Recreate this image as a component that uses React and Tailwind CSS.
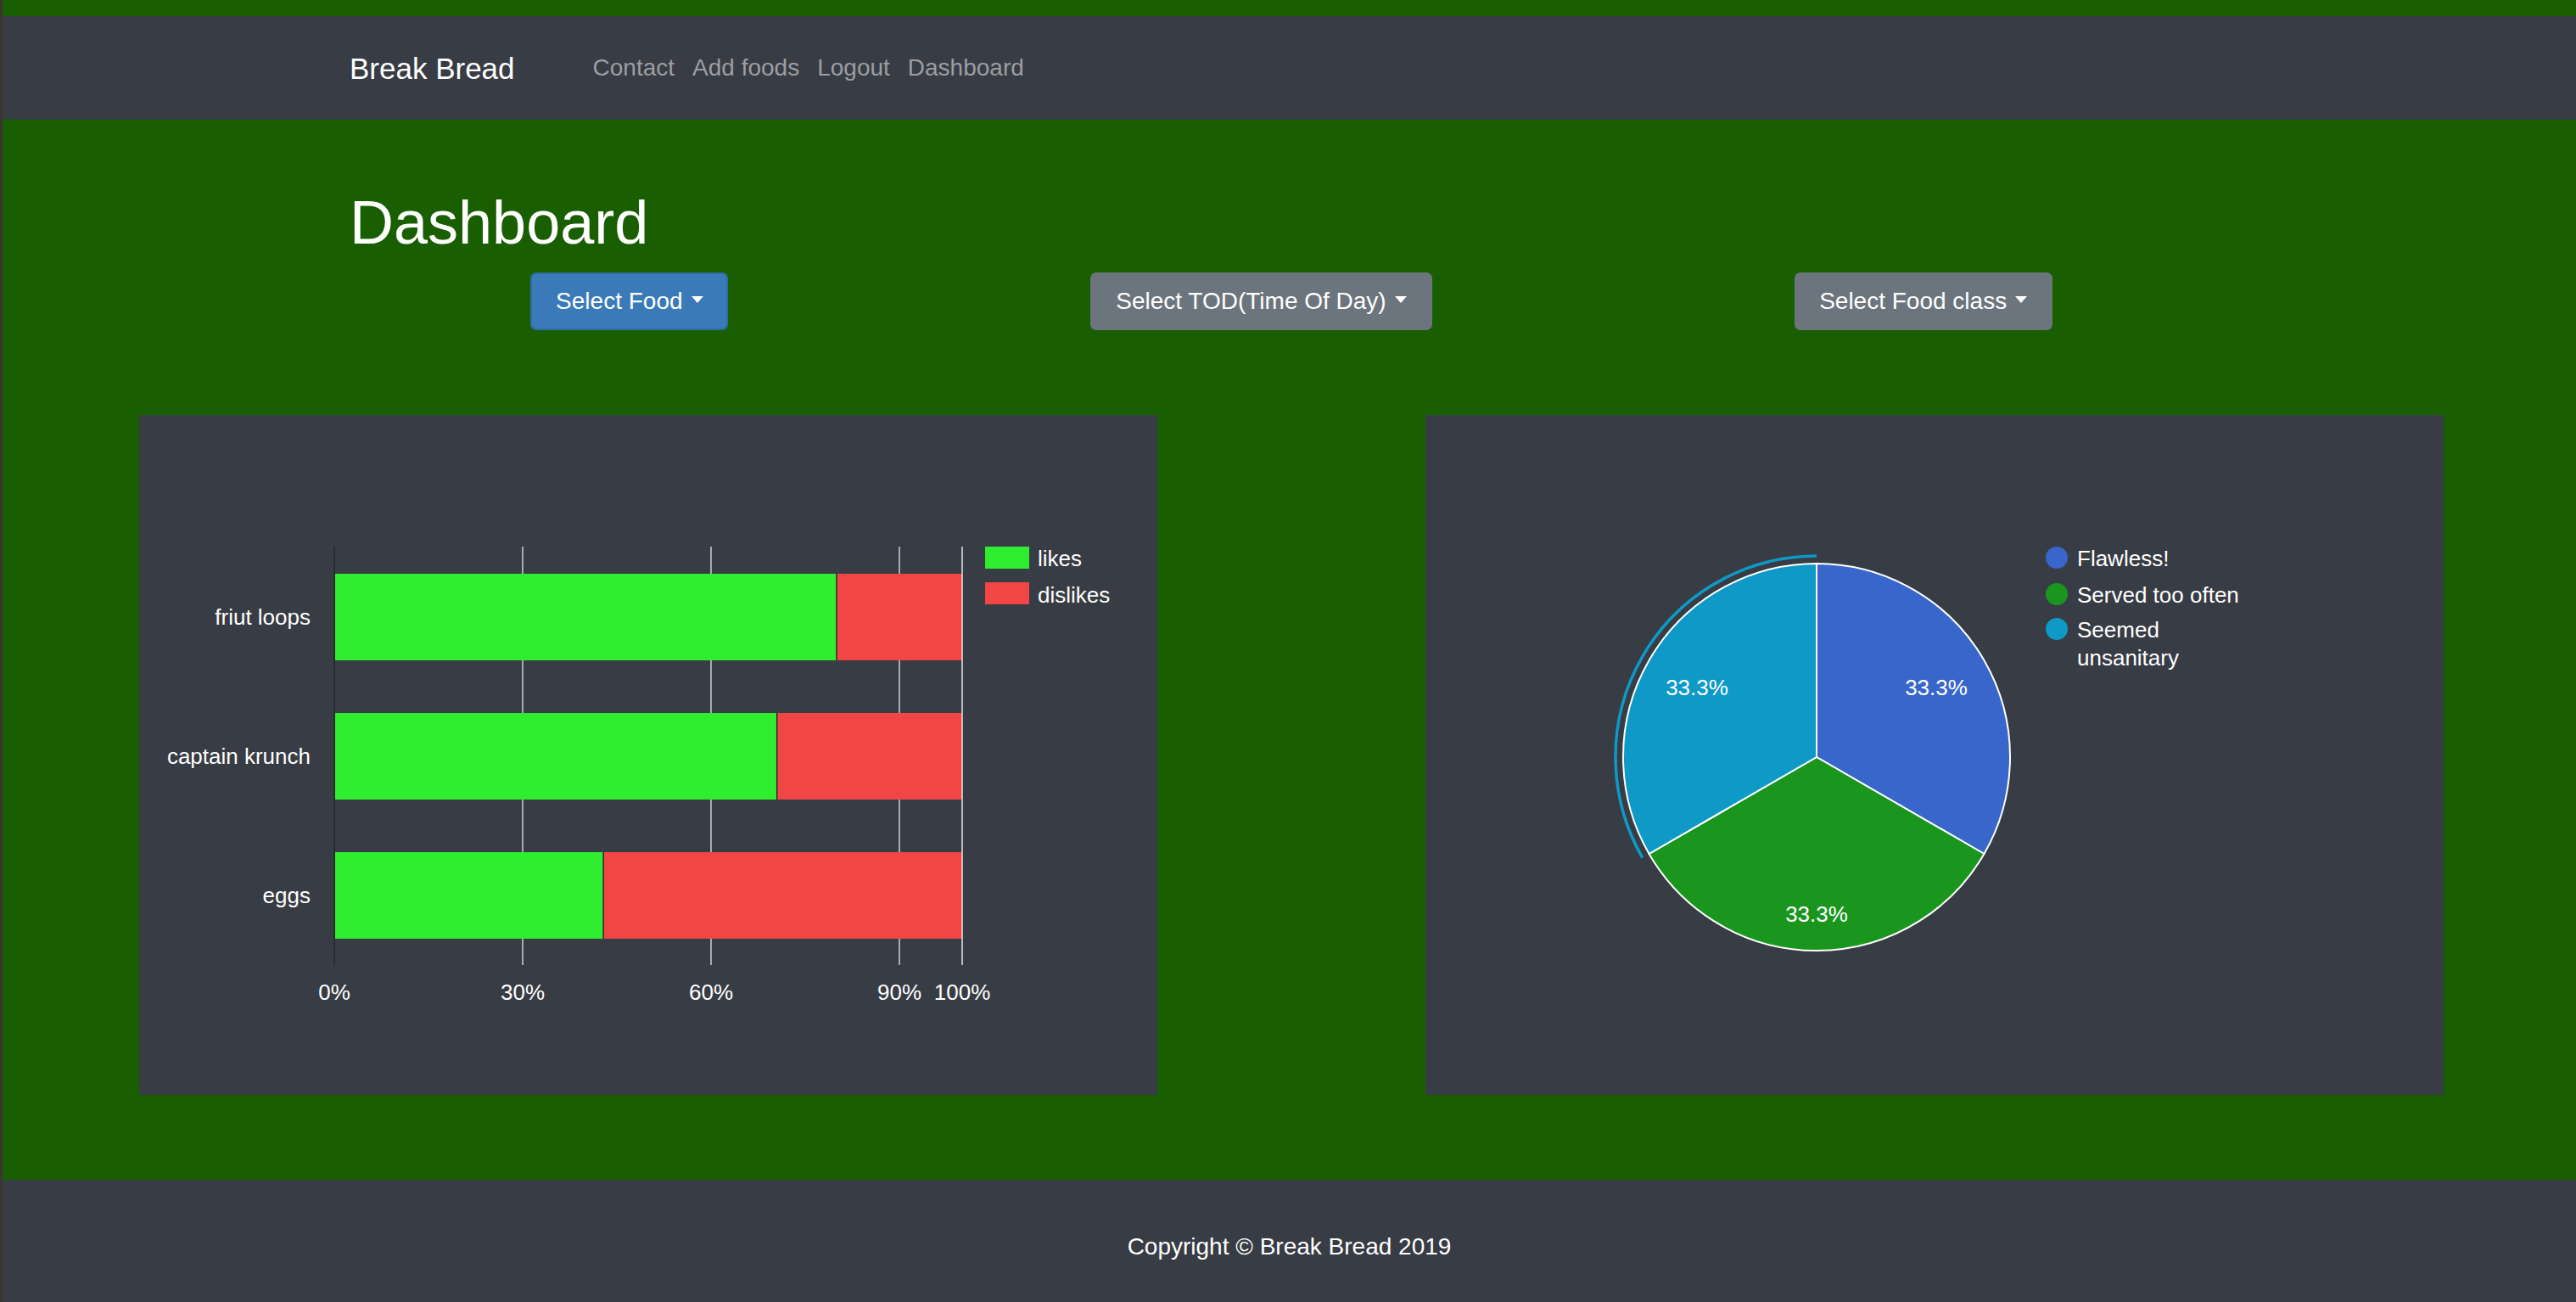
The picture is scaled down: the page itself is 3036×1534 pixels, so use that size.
const FONT = "'Liberation Sans', Arial, Helvetica, sans-serif";

// ─── Data ────────────────────────────────────────────────────────────────────
const foods = [
  { label: "friut loops", likes: 0.8 },
  { label: "captain krunch", likes: 0.705 },
  { label: "eggs", likes: 3 / 7 },
];

const slices = [
  { name: "Flawless!", color: "#3866cb", from: -90, to: 30 },
  { name: "Served too often", color: "#1a961f", from: 30, to: 150 },
  { name: "Seemed unsanitary", color: "#0e99c6", from: 150, to: 270 },
];

// ─── Helpers ─────────────────────────────────────────────────────────────────
function polar(cx, cy, r, deg) {
  const a = (deg * Math.PI) / 180;
  return [cx + r * Math.cos(a), cy + r * Math.sin(a)];
}

function Caret() {
  return (
    <span className="ml-[10px] inline-block align-[0.255em] border-x-[7px] border-t-[8px] border-x-transparent border-t-white" />
  );
}

// ─── Bar chart ───────────────────────────────────────────────────────────────
function BarChart() {
  const x0 = 230;
  const w = 740;
  const ticks = [0.3, 0.6, 0.9];
  return (
    <svg width="1200" height="800" viewBox="0 0 1200 800" fontFamily={FONT} fontSize="26" fill="#fff">
      {ticks.map((t) => (
        <line key={t} x1={x0 + w * t} x2={x0 + w * t} y1="155" y2="648" stroke="#cfcfcf" strokeWidth="1.5" />
      ))}
      <line x1={x0} x2={x0} y1="155" y2="648" stroke="#262626" strokeWidth="1.5" />

      {foods.map((f, i) => {
        const y = 187 + 164 * i;
        const split = x0 + w * f.likes;
        return (
          <g key={f.label}>
            <rect x={x0 + 1} y={y} width={split - x0 - 1} height="102" fill="#2eee2f" />
            <rect x={split} y={y} width={x0 + w - split} height="102" fill="#f24545" />
            <line x1={split} x2={split} y1={y} y2={y + 102} stroke="#2a2a2a" strokeWidth="1.5" />
            <text x="202" y={y + 60} textAnchor="end">
              {f.label}
            </text>
          </g>
        );
      })}
      <line x1={x0 + w} x2={x0 + w} y1="155" y2="648" stroke="#e6e6e6" strokeWidth="1.5" />

      {[0, 0.3, 0.6, 0.9, 1].map((t) => (
        <text key={t} x={x0 + w * t} y="689" textAnchor="middle">
          {Math.round(t * 100)}%
        </text>
      ))}

      {/* legend */}
      <rect x="997" y="155" width="52" height="26" fill="#2eee2f" />
      <text x="1059" y="178">likes</text>
      <rect x="997" y="197" width="52" height="26" fill="#f24545" />
      <text x="1059" y="221">dislikes</text>
    </svg>
  );
}

// ─── Pie chart ───────────────────────────────────────────────────────────────
function PieChart() {
  const cx = 461;
  const cy = 403;
  const r = 228;
  const [ax, ay] = polar(cx, cy, 237, 150);
  const [bx, by] = polar(cx, cy, 237, 270);
  return (
    <svg width="1200" height="800" viewBox="0 0 1200 800" fontFamily={FONT} fontSize="26" fill="#fff">
      {slices.map((s) => {
        const [x1, y1] = polar(cx, cy, r, s.from);
        const [x2, y2] = polar(cx, cy, r, s.to);
        return (
          <path
            key={s.name}
            d={`M ${cx} ${cy} L ${x1} ${y1} A ${r} ${r} 0 0 1 ${x2} ${y2} Z`}
            fill={s.color}
            stroke="#fff"
            strokeWidth="2"
          />
        );
      })}
      {/* hover ring on the last slice */}
      <path d={`M ${ax} ${ay} A 237 237 0 0 1 ${bx} ${by}`} fill="none" stroke="#0e99c6" strokeWidth="3.5" />

      <text x="602" y="330" textAnchor="middle">33.3%</text>
      <text x="320" y="330" textAnchor="middle">33.3%</text>
      <text x="461" y="597" textAnchor="middle">33.3%</text>

      {/* legend */}
      <circle cx="744" cy="168" r="13" fill="#3866cb" />
      <text x="768" y="178">Flawless!</text>
      <circle cx="744" cy="211" r="13" fill="#1a961f" />
      <text x="768" y="221">Served too often</text>
      <circle cx="744" cy="252" r="13" fill="#0e99c6" />
      <text x="768" y="262">Seemed</text>
      <text x="768" y="295">unsanitary</text>
    </svg>
  );
}

// ─── Page ────────────────────────────────────────────────────────────────────
export default function App() {
  return (
    <div className="min-h-screen border-l-[3px] border-[#3a3531] bg-[#195e00] font-['Liberation_Sans',Arial,sans-serif] text-white">
      <div className="h-[19px]" />

      <nav className="flex h-[122px] items-center bg-[#383c44] pl-[409px]">
        <a className="pt-[2px] text-[35px] text-white">Break Bread</a>
        <div className="ml-[92px] flex gap-[21px] text-[28px] text-[#9c9ea2]">
          <a>Contact</a>
          <a>Add foods</a>
          <a>Logout</a>
          <a>Dashboard</a>
        </div>
      </nav>

      <main className="pb-[100px]">
        <h1 className="ml-[409px] mt-[78px] text-[72px] leading-[1.2]">Dashboard</h1>

        <div className="ml-[409px] mt-[16px] flex w-[2220px] justify-around">
          <button className="h-[68px] w-[233px] rounded-[7px] border-2 border-[#2e6da4] bg-[#3a7ab8] text-[28px] leading-[42px] text-white">
            Select Food
            <Caret />
          </button>
          <button className="h-[68px] w-[403px] rounded-[7px] bg-[#6c757d] text-[28px] leading-[42px] text-white">
            Select TOD(Time Of Day)
            <Caret />
          </button>
          <button className="h-[68px] w-[304px] rounded-[7px] bg-[#6c757d] text-[28px] leading-[42px] text-white">
            Select Food class
            <Caret />
          </button>
        </div>

        <div className="ml-[161px] mt-[100px] flex gap-[316px]">
          <div className="h-[801px] w-[1200px] bg-[#383c44]">
            <BarChart />
          </div>
          <div className="h-[801px] w-[1200px] bg-[#383c44]">
            <PieChart />
          </div>
        </div>
      </main>

      <footer className="h-[144px] bg-[#383c44] pt-[58px] text-center text-[28px] leading-[1.5]">
        Copyright © Break Bread 2019
      </footer>
    </div>
  );
}
